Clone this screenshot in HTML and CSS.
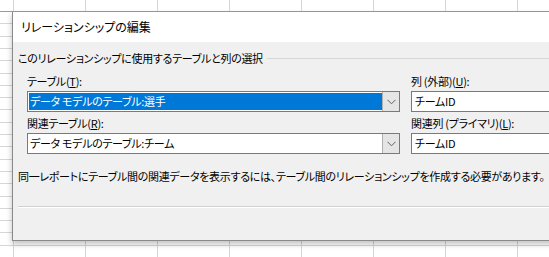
FILE: index.html
```html
<!DOCTYPE html>
<html lang="ja">
<head>
<meta charset="utf-8">
<link rel="stylesheet" href="styles.css">
</head>
<body>
<div class="sheet"></div>
<div class="dialog">
  <div class="titlebar">リレーションシップの編集</div>
  <div class="content">
    <div class="group-head"><span class="group-label">このリレーションシップに使用するテーブルと列の選択</span><span class="group-line"></span></div>
    <div class="fields">
      <div class="col-left">
        <div class="label">テーブル(<u>T</u>):</div>
        <div class="combo selected"><div class="combo-text">データ モデルのテーブル:選手</div><div class="combo-btn"><svg width="9" height="6" viewBox="0 0 9 6"><path d="M0.5 0.8 L4.5 4.8 L8.5 0.8" fill="none" stroke="#606060" stroke-width="1"/></svg></div></div>
        <div class="label">関連テーブル(<u>R</u>):</div>
        <div class="combo"><div class="combo-text">データ モデルのテーブル:チーム</div><div class="combo-btn"><svg width="9" height="6" viewBox="0 0 9 6"><path d="M0.5 0.8 L4.5 4.8 L8.5 0.8" fill="none" stroke="#606060" stroke-width="1"/></svg></div></div>
      </div>
      <div class="col-right">
        <div class="label">列 (外部)(<u>U</u>):</div>
        <div class="textbox">チームID</div>
        <div class="label">関連列 (プライマリ)(<u>L</u>):</div>
        <div class="textbox">チームID</div>
      </div>
    </div>
    <div class="desc">同一レポートにテーブル間の関連データを表示するには、テーブル間のリレーションシップを作成する必要があります。</div>
    <div class="separator"></div>
  </div>
</div>
</body>
</html>
```
FILE: styles.css
```css
html, body {
  margin: 0;
  padding: 0;
}
body {
  width: 549px;
  height: 257px;
  overflow: hidden;
  position: relative;
  background: #ffffff;
  font-family: "Noto Sans CJK JP", "Noto Sans", sans-serif;
  font-feature-settings: "palt";
  color: #000;
}
.sheet {
  width: 549px;
  height: 257px;
  background-color: #fff;
  background-image:
    linear-gradient(#9a9a9a, #9a9a9a),
    repeating-linear-gradient(to right, transparent 0, transparent 13px, #d6d6d6 13px, #d6d6d6 14px, transparent 14px, transparent 72px),
    repeating-linear-gradient(to bottom, transparent 0, transparent 11px, #d6d6d6 11px, #d6d6d6 12px, transparent 12px, transparent 12.3px);
  background-size: 549px 1px, 549px 257px, 549px 257px;
  background-position: 0 11px, 0 0, 0 0;
  background-repeat: no-repeat, repeat, repeat;
}
.dialog {
  position: absolute;
  left: 12px;
  top: 12px;
  width: 560px;
  height: 228px;
  background: #f0f0f0;
  border-left: 1px solid #8a8a8a;
  border-bottom: 1px solid #8a8a8a;
  box-shadow: 0 3px 6px rgba(0,0,0,0.25);
  display: flex;
  flex-direction: column;
}
.titlebar {
  height: 30px;
  background: #ffffff;
  font-size: 12px;
  line-height: 30px;
  padding-left: 8px;
  flex: none;
}
.content {
  padding: 7px 0 0 5px;
  display: flex;
  flex-direction: column;
  font-size: 11px;
  letter-spacing: -0.3px;
}
.group-head {
  display: flex;
  align-items: center;
  height: 18px;
}
.group-label {
  line-height: 18px;
  white-space: nowrap;
}
.group-line {
  flex: 1;
  height: 1px;
  background: #d5d5d5;
  margin-left: 4px;
}
.fields {
  display: flex;
  padding-left: 9px;
  padding-top: 5px;
  gap: 11px;
}
.col-left {
  width: 373px;
  display: flex;
  flex-direction: column;
}
.col-right {
  flex: 1;
  display: flex;
  flex-direction: column;
}
.label {
  height: 19px;
  line-height: 18px;
  white-space: nowrap;
}
.label u {
  text-underline-offset: 1px;
}
.combo {
  height: 19px;
  border: 1px solid #7a7a7a;
  background: #fff;
  display: flex;
  margin-bottom: 2px;
}
.combo-text {
  flex: 1;
  line-height: 19px;
  padding-left: 2px;
  white-space: nowrap;
  overflow: hidden;
}
.combo.selected .combo-text {
  background: #0078d7;
  color: #fff;
  margin: 1px 0 1px 1px;
  line-height: 17px;
  padding-left: 1px;
}
.combo-btn {
  width: 16px;
  background: #e5e5e5;
  border-left: 1px solid #b0b0b0;
  display: flex;
  align-items: center;
  justify-content: center;
}
.textbox {
  height: 19px;
  border: 1px solid #7a7a7a;
  border-right: none;
  background: #fff;
  line-height: 19px;
  padding-left: 3px;
  margin-bottom: 2px;
  white-space: nowrap;
}
.desc {
  line-height: 18px;
  margin-top: 11px;
  white-space: nowrap;
}
.separator {
  margin-top: 21px;
  height: 1px;
  background: #d0d0d0;
  border-bottom: 1px solid #fff;
}
```
